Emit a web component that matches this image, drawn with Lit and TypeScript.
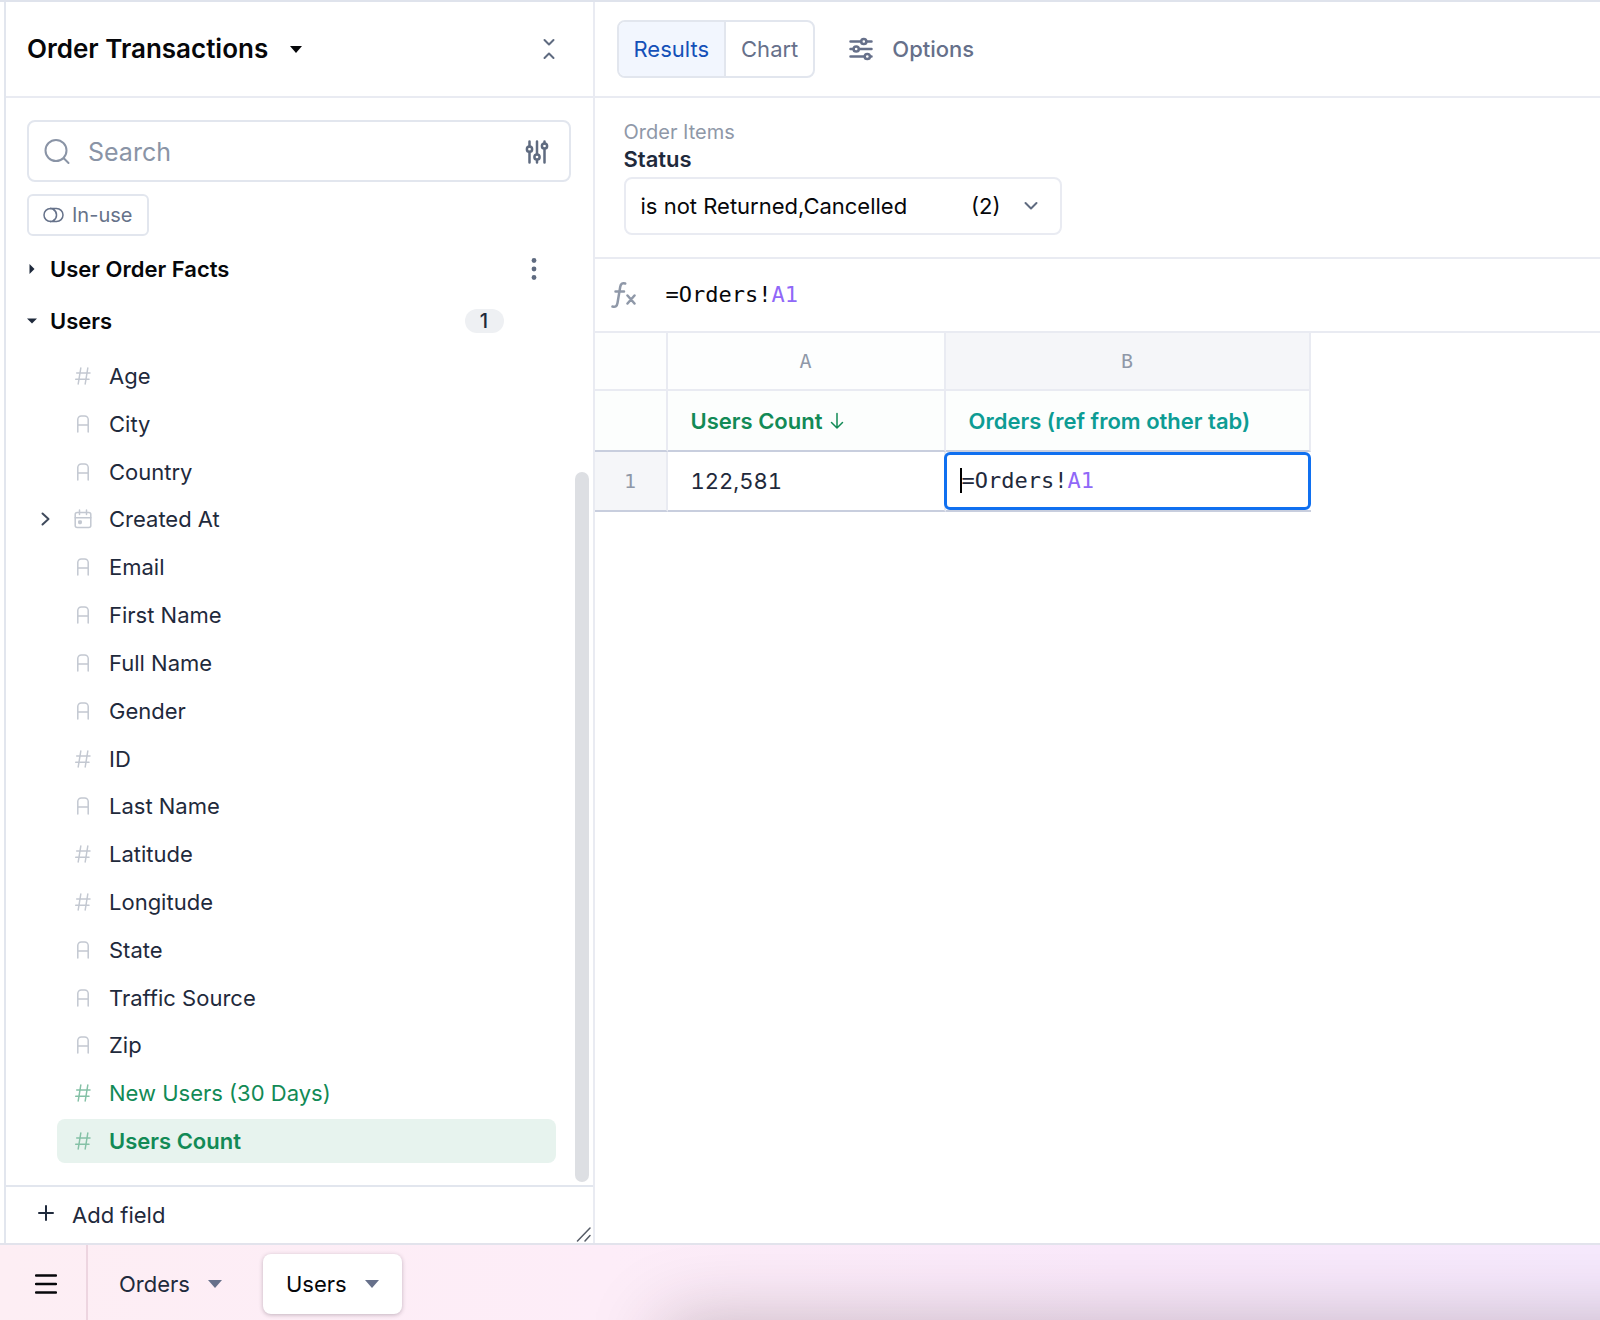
import { LitElement, html, css, svg, nothing } from "lit";
import { customElement, state } from "lit/decorators.js";
import { classMap } from "lit/directives/class-map.js";

type Kind = "number" | "text" | "date";
interface Field {
  name: string;
  kind: Kind;
  measure?: boolean;
}

const FIELDS: Field[] = [
  { name: "Age", kind: "number" },
  { name: "City", kind: "text" },
  { name: "Country", kind: "text" },
  { name: "Created At", kind: "date" },
  { name: "Email", kind: "text" },
  { name: "First Name", kind: "text" },
  { name: "Full Name", kind: "text" },
  { name: "Gender", kind: "text" },
  { name: "ID", kind: "number" },
  { name: "Last Name", kind: "text" },
  { name: "Latitude", kind: "number" },
  { name: "Longitude", kind: "number" },
  { name: "State", kind: "text" },
  { name: "Traffic Source", kind: "text" },
  { name: "Zip", kind: "text" },
  { name: "New Users (30 Days)", kind: "number", measure: true },
  { name: "Users Count", kind: "number", measure: true },
];

const icon = (w: number, h: number, body: unknown, cls = "") => html`
  <svg class="icon ${cls}" width=${w} height=${h} viewBox="0 0 ${w} ${h}" aria-hidden="true">${body}</svg>
`;

const kindIcon = (kind: Kind) => {
  if (kind === "number")
    return icon(18, 20, svg`<path d="M6.800 2 4.200 18M13.800 2l-2.600 16M2.700 7h13.300M1.700 13.200h13.300"/>`);
  if (kind === "text")
    return icon(18, 20, svg`<path d="M3.800 18V5.500a3.500 3.500 0 0 1 3.500-3.500h3.400a3.500 3.500 0 0 1 3.500 3.500v12.500M3.800 11h10.400"/>`);
  return icon(18, 20, svg`<rect x="1.200" y="3.500" width="15.600" height="15" rx="2"/><path d="M1.200 8.800h15.600M5.500 1v4.500M12.500 1v4.500"/><rect x="4.800" y="12" width="2.400" height="2.400" rx=".6" fill="currentColor"/>`);
};

@customElement("app-root")
export class AppRoot extends LitElement {
  @state() private selected = "Users Count";
  @state() private view = "Results";
  @state() private tab = "Users";

  static styles = css`
    :host {
      display: block;
      font-family: Inter, "Liberation Sans", sans-serif;
      font-size: 22px;
      line-height: 28px;
      color: #1f2a3c;
      background: #fff;
    }
    *, *::before, *::after { box-sizing: border-box; }
    button, input, select {
      font: inherit;
      color: inherit;
      background: none;
      border: 0;
      margin: 0;
      padding: 0;
      text-align: left;
    }
    button { cursor: pointer; }
    ul { list-style: none; margin: 0; padding: 0; }
    h1, h2 { margin: 0; font-size: inherit; font-weight: inherit; }
    .icon {
      display: block;
      flex: none;
      fill: none;
      stroke: currentColor;
      stroke-width: 1.5;
      stroke-linecap: round;
      stroke-linejoin: round;
    }
    .solid { fill: currentColor; stroke: none; }
    .bold { stroke-width: 2; }
    .heavy { stroke-width: 2.5; }

    .app {
      display: flex;
      flex-direction: column;
      min-height: 100vh;
      border-top: 2px solid #dfe3ec;
    }
    .body { display: flex; flex: 1; padding-left: 4px; }

    .sidebar {
      position: relative;
      display: flex;
      flex-direction: column;
      flex: 0 0 37%;
      max-width: 591px;
      border-left: 2px solid #e2e6ee;
      border-right: 2px solid #e9ebf2;
    }
    .side-head {
      display: flex;
      align-items: center;
      justify-content: space-between;
      height: 96px;
      padding: 0 38px 0 21px;
      border-bottom: 2px solid #e9ebf2;
    }
    .model {
      display: flex;
      align-items: center;
      gap: 22px;
      font-size: 26px;
      font-weight: 600;
      color: #06070a;
    }
    .muted { color: #5f6b80; }

    .side-main {
      display: flex;
      flex-direction: column;
      flex: 1;
      padding: 22px 37px 22px 21px;
    }
    .search {
      display: flex;
      align-items: center;
      gap: 16px;
      height: 62px;
      margin-right: -15px;
      padding: 1px 20px 0 15px;
      border: 2px solid #e2e6ee;
      border-radius: 8px;
      color: #8a94a6;
    }
    .search input { flex: 1; min-width: 0; font-size: 25px; outline: 0; }
    .search input::placeholder { color: #8a94a6; opacity: 1; }
    .chip {
      display: flex;
      align-items: center;
      align-self: flex-start;
      gap: 8px;
      height: 42px;
      margin-top: 12px;
      padding: 0 15px 0 14px;
      border: 2px solid #e2e6ee;
      border-radius: 6px;
      font-size: 20px;
      color: #66728a;
    }

    .group { display: flex; align-items: center; height: 52px; }
    .group.first { margin-top: 7px; }
    .group-name {
      display: flex;
      align-items: center;
      gap: 13px;
      flex: 1;
      font-weight: 600;
      color: #06070a;
    }
    .group .icon { color: #1f2a3c; }
    .group .more { color: #5f6b80; margin-right: 14px; }
    .group .more .icon { color: inherit; }
    .count {
      width: 39px;
      margin-right: 52px;
      border-radius: 12px;
      background: #eef0f3;
      font-size: 20px;
      font-weight: 500;
      line-height: 24px;
      text-align: center;
    }
    .fields {
      display: flex;
      flex-direction: column;
      justify-content: space-between;
      flex: 1;
      margin-top: 7px;
    }
    .field { display: flex; align-items: center; }
    .twist { width: 30px; padding-left: 13px; flex: none; color: #3f4a5c; }
    .field-name {
      display: flex;
      align-items: center;
      flex: 1;
      gap: 17px;
      height: 44px;
      padding-left: 17px;
      border-radius: 8px;
    }
    .field-name .icon { color: #c3c8d1; }
    .field-name.measure { color: #128a56; }
    .field-name.measure .icon { color: #84c1a6; }
    .field-name.on { background: #e7f3ee; font-weight: 600; }

    .thumb {
      position: absolute;
      right: 4px;
      top: 470px;
      bottom: 61px;
      width: 14px;
      border-radius: 7px;
      background: #dddfe3;
    }
    .grip { position: absolute; right: 1px; bottom: 1px; color: #555b66; }
    .add {
      display: flex;
      align-items: center;
      gap: 18px;
      height: 58px;
      padding-left: 32px;
      border-top: 2px solid #e2e6ee;
    }

    .main { flex: 1; min-width: 0; }
    .toolbar {
      display: flex;
      align-items: center;
      gap: 34px;
      height: 96px;
      padding-left: 22px;
      border-bottom: 2px solid #e9ebf2;
      color: #66708a;
    }
    .switch {
      display: flex;
      height: 58px;
      border: 2px solid #e2e6ee;
      border-radius: 8px;
      overflow: hidden;
    }
    .switch button { padding: 0 15px; }
    .switch button + button { border-left: 2px solid #e2e6ee; }
    .switch .on { background: #f2f6fe; color: #1450b8; }
    .options { display: flex; align-items: center; gap: 19px; font-weight: 500; }

    .filters { padding: 21px 0 22px 29px; border-bottom: 2px solid #e9ebf2; }
    .filters label { display: block; width: fit-content; font-weight: 600; line-height: 27px; }
    .filters small { display: block; font-size: 20px; font-weight: 400; color: #8f98a8; }
    .picker {
      display: grid;
      align-items: center;
      width: 438px;
      max-width: 100%;
      height: 58px;
      margin-top: 4px;
      border: 2px solid #e9ebf2;
      border-radius: 8px;
      color: #06070a;
    }
    .picker > * { grid-area: 1 / 1; }
    .picker select { appearance: none; height: 100%; padding: 0 100px 0 15px; outline: 0; }
    .picker-end {
      display: flex;
      align-items: center;
      justify-self: end;
      gap: 22px;
      padding-right: 21px;
      pointer-events: none;
    }

    .formula {
      display: flex;
      align-items: center;
      gap: 29px;
      height: 74px;
      padding-left: 16px;
      border-bottom: 2px solid #e9ebf2;
      color: #06070a;
    }
    .formula > .icon { color: #8f98a8; }
    .code { display: grid; flex: 1; font-family: "DejaVu Sans Mono", "Liberation Mono", monospace; }
    .code > * { grid-area: 1 / 1; line-height: 28px; }
    .code input { color: transparent; caret-color: transparent; outline: 0; width: 100%; }
    .ref { color: #9068f8; }

    table { border-collapse: separate; border-spacing: 0; table-layout: fixed; width: 716px; }
    th, td {
      padding: 0 23px;
      border-right: 2px solid #e9ebf2;
      border-bottom: 2px solid #e9ebf2;
      text-align: left;
      font-weight: 400;
    }
    .c0 { width: 73px; }
    .c1 { width: 278px; }
    .letters th, .row th {
      color: #8f98a8;
      font-family: "DejaVu Sans Mono", "Liberation Mono", monospace;
      font-size: 20px;
      text-align: center;
    }
    .letters th { height: 58px; background: #fdfefe; }
    .letters .cur { background: #f5f6f9; }
    .names th { height: 61px; background: #fcfefd; border-bottom-color: #c8cede; font-weight: 600; }
    .names .green { color: #128a56; }
    .names .teal { color: #0d9c94; }
    .sort { display: flex; align-items: center; gap: 8px; }
    .row th, .row td { height: 60px; border-bottom-color: #c8cede; }
    .row td { font-variant-numeric: tabular-nums; }
    .row th { padding: 0; background: #f5f6f9; }
    .row .edit { padding: 0; border-right: 0; }
    .editor {
      display: flex;
      align-items: center;
      height: 58px;
      margin-left: -2px;
      padding-left: 13px;
      border: 3px solid #1070f0;
      border-radius: 6px;
    }
    .caret { border-left: 2px solid #000; }

    .tabs {
      position: relative;
      display: flex;
      align-items: center;
      height: 77px;
      overflow: hidden;
      border-top: 2px solid #e2e3ec;
      background: linear-gradient(90deg, #fdeef4 0%, #fdedf8 38%, #fae9fb 70%, #f6e9fd 100%);
    }
    .tabs::after {
      content: "";
      position: absolute;
      top: 100%;
      left: 664px;
      right: -100px;
      height: 100px;
      box-shadow: 0 0 72px rgba(50, 30, 40, 0.26);
      pointer-events: none;
    }
    .menu {
      display: flex;
      align-items: center;
      align-self: stretch;
      width: 88px;
      padding: 2px 0 0 35px;
      border-right: 2px solid #edd5e0;
      color: #06070a;
    }
    .tab-list { display: flex; gap: 18px; padding: 2px 0 0 8px; }
    .tab {
      display: flex;
      align-items: center;
      gap: 18px;
      height: 60px;
      padding: 0 23px;
      border-radius: 8px;
    }
    .tab.on { background: #fff; color: #06070a; box-shadow: 0 1px 4px rgba(60, 40, 60, 0.3); }
    .tab .icon { color: #66708a; }
  `;

  private formula(caret = false) {
    return html`
      <span class="code">
        <span aria-hidden="true"><span class=${caret ? "caret" : ""}>=Orders!</span><span class="ref">A1</span></span>
        <input type="text" aria-label=${caret ? "Cell B1" : "Formula"} value="=Orders!A1" />
      </span>
    `;
  }

  private fieldRow(f: Field) {
    const cls = classMap({ "field-name": true, measure: !!f.measure, on: f.name === this.selected });
    return html`
      <li class="field">
        <span class="twist">${f.kind === "date"
          ? icon(12, 16, svg`<path d="M2.500 2.500 8.500 8 2.500 13.500"/>`, "bold")
          : nothing}</span>
        <button class=${cls} @click=${() => (this.selected = f.name)}>${kindIcon(f.kind)}${f.name}</button>
      </li>
    `;
  }

  private down = (w: number, h: number) =>
    icon(w, h, svg`<path d=${`M0 0h${w}L${w / 2} ${h}z`}/>`, "solid");

  render() {
    return html`
      <div class="app">
        <div class="body">
          <aside class="sidebar">
            <header class="side-head">
              <h1><button class="model">Order Transactions ${this.down(12, 7)}</button></h1>
              <button class="muted" aria-label="Collapse all">
                ${icon(12, 22, svg`<path d="m1.500 2 4.500 4.500L10.500 2M1.500 20 6 15.500l4.500 4.500"/>`, "bold")}
              </button>
            </header>
            <div class="side-main">
              <div class="search">
                ${icon(28, 28, svg`<circle cx="12" cy="12.500" r="10.500"/><path d="m20 20.500 4.500 4.500"/>`, "bold")}
                <input type="text" placeholder="Search" aria-label="Search fields" />
                <button class="muted" aria-label="Filter fields">
                  ${icon(24, 24, svg`<path d="M4.500 1.500v5M4.500 12v10.500M12 1.500v12.500M12 20v2.500M19.500 1.500V3.500M19.500 9v13.500"/><circle cx="4.500" cy="9.200" r="2.600"/><circle cx="12" cy="17" r="2.600"/><circle cx="19.500" cy="6" r="2.600"/>`, "heavy")}
                </button>
              </div>
              <button class="chip">
                ${icon(21, 16, svg`<path d="M7.500 1.500h6a6.300 6.300 0 0 1 0 13h-6M10.500 2.500a6.500 6.500 0 0 1 0 11"/><path d="M7.500 1.500a6.300 6.300 0 0 0 0 13"/><path d="M7.500 1.500q1.600 0 3 1M7.500 14.500q1.600 0 3-1"/>`)}
                In-use
              </button>
              <div class="group first">
                <button class="group-name">
                  ${icon(10, 10, svg`<path d="M2.500 0v10l5-5z"/>`, "solid")} User Order Facts
                </button>
                <button class="more" aria-label="More">
                  ${icon(16, 22, svg`<circle cx="8" cy="2.500" r="2.400"/><circle cx="8" cy="11" r="2.400"/><circle cx="8" cy="19.500" r="2.400"/>`, "solid")}
                </button>
              </div>
              <div class="group">
                <button class="group-name">
                  ${icon(10, 10, svg`<path d="M0 2.500h10l-5 5z"/>`, "solid")} Users
                </button>
                <span class="count">1</span>
              </div>
              <ul class="fields">${FIELDS.map((f) => this.fieldRow(f))}</ul>
            </div>
            <button class="add">
              ${icon(16, 20, svg`<path d="M8 1v14M1 8h14"/>`, "bold")} Add field
            </button>
            <span class="thumb"></span>
            <span class="grip">${icon(16, 16, svg`<path d="M1.500 15 14 2M9 15l5-5.500"/>`)}</span>
          </aside>

          <main class="main">
            <div class="toolbar">
              <div class="switch">
                ${["Results", "Chart"].map(
                  (v) => html`<button class=${classMap({ on: v === this.view })} @click=${() => (this.view = v)}>${v}</button>`
                )}
              </div>
              <button class="options">
                ${icon(24, 24, svg`<path d="M1.500 4.500h10.500M17.500 4.500h5M1.500 12H4.500M10 12h12.500M1.500 19.500h14M21.500 19.500h1"/><circle cx="14.800" cy="4.500" r="2.600"/><circle cx="7.200" cy="12" r="2.600"/><circle cx="18.300" cy="19.500" r="2.600"/>`, "heavy")}
                Options
              </button>
            </div>
            <div class="filters">
              <label for="status"><small>Order Items</small>Status</label>
              <div class="picker">
                <select id="status"><option>is not Returned,Cancelled</option></select>
                <span class="picker-end">
                  (2) ${icon(16, 10, svg`<path d="m2.500 2 5.500 5.500L13.500 2"/>`, "bold muted")}
                </span>
              </div>
            </div>
            <div class="formula">
              ${icon(26, 28, svg`<path d="M1.500 25.500c3 1 4.500-.5 5-3.500l2.700-16c.5-3 2-4.500 5-3.500M4.500 10.500h8.500M16.500 14.500l7 8M23.500 14.500l-7 8"/>`, "heavy")}
              ${this.formula()}
            </div>
            <table>
              <colgroup><col class="c0" /><col class="c1" /><col /></colgroup>
              <thead>
                <tr class="letters"><th></th><th>A</th><th class="cur">B</th></tr>
                <tr class="names">
                  <th></th>
                  <th class="green">
                    <span class="sort">Users Count ${icon(14, 18, svg`<path d="M7 1.500v14.500M1.500 10.500 7 16l5.500-5.500"/>`)}</span>
                  </th>
                  <th class="teal">Orders (ref from other tab)</th>
                </tr>
              </thead>
              <tbody>
                <tr class="row">
                  <th scope="row">1</th>
                  <td>122,581</td>
                  <td class="edit"><div class="editor">${this.formula(true)}</div></td>
                </tr>
              </tbody>
            </table>
          </main>
        </div>

        <nav class="tabs">
          <button class="menu" aria-label="All tabs">
            ${icon(22, 20, svg`<path d="M1 1.500h20M1 10h20M1 18.500h20"/>`, "heavy")}
          </button>
          <div class="tab-list">
            ${["Orders", "Users"].map(
              (t) => html`<button class=${classMap({ tab: true, on: t === this.tab })} @click=${() => (this.tab = t)}>${t} ${this.down(14, 8)}</button>`
            )}
          </div>
        </nav>
      </div>
    `;
  }
}
